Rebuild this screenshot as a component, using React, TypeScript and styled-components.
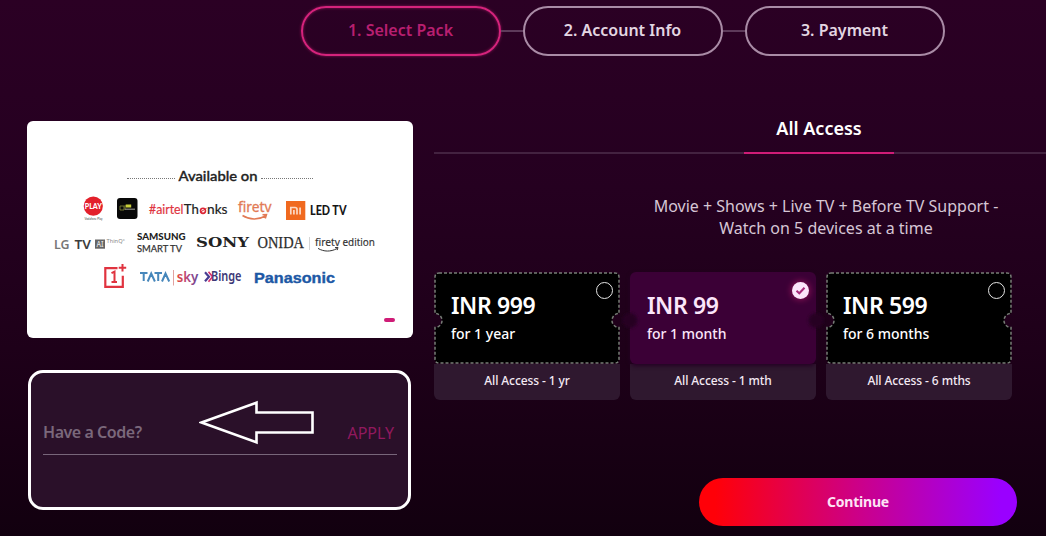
import React from "react";
import styled, { createGlobalStyle, css } from "styled-components";

const GlobalStyle = createGlobalStyle`
  * {
    box-sizing: border-box;
  }
  body {
    margin: 0;
    overflow: hidden;
    background: #16000f;
    font-family: "Noto Sans", "Open Sans", sans-serif;
  }
`;

const steps = ["1. Select Pack", "2. Account Info", "3. Payment"];

const packs = [
  { price: "INR 999", period: "for 1 year", name: "All Access - 1 yr" },
  { price: "INR 99", period: "for 1 month", name: "All Access - 1 mth" },
  { price: "INR 599", period: "for 6 months", name: "All Access - 6 mths" },
];

interface LogoProps {
  width: number;
  children: React.ReactNode;
}
// every logo in a row shares the same 30px tall box
const Logo = ({ width, children }: LogoProps) => (
  <LogoSvg width={width} height={30} viewBox={`0 0 ${width} 30`}>
    {children}
  </LogoSvg>
);

interface WordProps extends React.SVGProps<SVGTextElement> {
  length: number;
}
const Word = ({ length, children, ...rest }: WordProps) => (
  <text textLength={length} lengthAdjust="spacingAndGlyphs" {...rest}>
    {children}
  </text>
);

const Partners = () => (
  <Banner>
    <BannerTitle>
      <Dots $width={48} />
      <svg width={80} height={18}>
        <Word length={79} x={0.5} y={13.5} fontSize={13.5} fontFamily="Lato, sans-serif" fontWeight={500} fill="#222" stroke="#222" strokeWidth={0.35}>
          Available on
        </Word>
      </svg>
      <Dots $width={52} />
    </BannerTitle>
    <LogoRow $left={55}>
      <Logo width={35}>
        <circle cx={11.3} cy={11.1} r={9.6} fill="#e3202b" />
        <Word length={17} x={2.8} y={14.1} fontSize={8} fontFamily="Lato, sans-serif" fontWeight={900} fill="#fff">
          PLAY
        </Word>
        <Word length={18} x={2.5} y={25.2} fontSize={4} fontFamily="Lato, sans-serif" fill="#3c4a48">
          Vodafone Play
        </Word>
      </Logo>
      <Logo width={32}>
        <rect x={0} y={3} width={20.5} height={21} rx={3} fill="#080808" />
        <path d="M3 11h4v4H3zM8 10v5" fill="none" stroke="#8c913c" strokeWidth={0.8} />
        <rect x={8.7} y={9.5} width={5.5} height={3} fill="#c9cf3a" />
        <path d="M8 14.2h10" stroke="#8b8b86" strokeWidth={1.2} />
      </Logo>
      <Logo width={89}>
        <Word length={34.5} x={0} y={19} fontSize={13} fontFamily="Lato, sans-serif" fill="#e0343f" stroke="#e0343f" strokeWidth={0.2}>
          #airtel
        </Word>
        <Word length={15} x={34.8} y={19} fontSize={13} fontFamily="Lato, sans-serif" fill="#222" stroke="#222" strokeWidth={0.2}>
          Th
        </Word>
        <ellipse cx={54} cy={15.8} rx={2.5} ry={2.6} fill="none" stroke="#dc2636" strokeWidth={1.6} />
        <path d="M51 17.3l6.5-4" stroke="#dc2636" strokeWidth={1} />
        <Word length={20.5} x={58} y={19} fontSize={13} fontFamily="Lato, sans-serif" fill="#222" stroke="#222" strokeWidth={0.2}>
          nks
        </Word>
      </Logo>
      <Logo width={48}>
        <Word length={33.5} x={0} y={17} fontSize={14} fontFamily="Noto Sans, sans-serif" fill="#e27a55" stroke="#e27a55" strokeWidth={0.3}>
          firetv
        </Word>
        <path d="M4.5 20.5c7 4.5 16 4.5 23 .5M24.5 19.8l4-.2-1.2 3.8" fill="none" stroke="#e27a55" strokeWidth={1.5} />
      </Logo>
      <Logo width={24}>
        <rect x={0} y={6} width={19.3} height={19} fill="#f0691f" />
        <path d="M4.8 19.5v-7h4.2q2 0 2 2v5M7.9 15v4.5M14.1 12.5v7" fill="none" stroke="#fbd9c5" strokeWidth={1.7} />
      </Logo>
      <Logo width={38}>
        <Word length={36.5} x={0} y={19.5} fontSize={13} fontFamily="Lato, sans-serif" fontWeight={900} fill="#161616">
          LED TV
        </Word>
      </Logo>
    </LogoRow>
    <LogoRow $left={27}>
      <Logo width={83}>
        <Word length={15.5} x={0} y={19.5} fontSize={12} fontFamily="Noto Sans, sans-serif" fontWeight={600} fill="#777">
          LG
        </Word>
        <Word length={16.5} x={20.5} y={19.5} fontSize={12} fontFamily="Noto Sans, sans-serif" fontWeight={600} fill="#3d3d3d">
          TV
        </Word>
        <rect x={41} y={10.5} width={10} height={9.2} fill="#666" />
        <Word length={7} x={42.5} y={18} fontSize={8} fontFamily="Noto Sans, sans-serif" fontWeight={600} fill="#ddd">
          AI
        </Word>
        <Word length={18.5} x={52.5} y={14} fontSize={5.5} fontFamily="Noto Sans, sans-serif" fill="#888">
          ThinQ°
        </Word>
      </Logo>
      <Logo width={59}>
        <Word length={48.5} x={0} y={11} fontSize={10} fontFamily="Lato, sans-serif" fontWeight={900} fill="#222">
          SAMSUNG
        </Word>
        <Word length={45} x={0} y={23.4} fontSize={10} fontFamily="Lato, sans-serif" fill="#333" stroke="#333" strokeWidth={0.25}>
          SMART TV
        </Word>
      </Logo>
      <Logo width={62}>
        <Word length={53} x={0} y={18} fontSize={12.5} fontFamily="DejaVu Serif, serif" fontWeight={700} fill="#222">
          SONY
        </Word>
      </Logo>
      <Logo width={57}>
        <Word length={46.5} x={-0.5} y={19} fontSize={16} fontFamily="Liberation Serif, serif" fill="#2c2c2c" stroke="#2c2c2c" strokeWidth={0.25}>
          ONIDA
        </Word>
        <path d="M51.5 8v13" stroke="#d5d5d5" strokeWidth={1} />
      </Logo>
      <Logo width={62}>
        <Word length={25} x={0} y={17} fontSize={11} fontFamily="Noto Sans, sans-serif" fill="#333" stroke="#333" strokeWidth={0.15}>
          firetv
        </Word>
        <Word length={32.5} x={27.5} y={17} fontSize={11} fontFamily="Noto Sans, sans-serif" fill="#333" stroke="#333" strokeWidth={0.15}>
          edition
        </Word>
        <path d="M3 19.4c6 3.5 12.5 3.5 19 .2M20 18.6l3-.2-.8 2.7" fill="none" stroke="#333" strokeWidth={1} />
      </Logo>
    </LogoRow>
    <LogoRow $left={77}>
      <Logo width={36}>
        <path d="M13.5 5.2H1.3v18.6h17.5v-11" fill="none" stroke="#e0333f" strokeWidth={2.2} />
        <path d="M18.5 1v7.5M14.7 4.7h7.5" stroke="#e0333f" strokeWidth={2} />
        <path d="M7.5 10.2l3-1.5v10.5M7.5 19h5.5" fill="none" stroke="#e0333f" strokeWidth={2} />
      </Logo>
      <Logo width={64}>
        <path
          d="M0 10h7.5M3.7 10v8M7.7 18.5l3.5-8 3.7 8M14.5 10h7.5M18.2 10v8M22 18.5l3.5-8 3.7 8"
          fill="none"
          stroke="#4787bb"
          strokeWidth={2}
        />
        <path d="M33.5 7v15.5" stroke="#e2a2a0" strokeWidth={1} />
        <Word length={21.5} x={36.7} y={18.5} fontSize={14} fontFamily="Noto Sans, sans-serif" fontWeight={600} fill="url(#sky)">
          sky
        </Word>
        <defs>
          <linearGradient id="sky">
            <stop offset="0" stopColor="#e3473b" />
            <stop offset="0.5" stopColor="#b4457e" />
            <stop offset="1" stopColor="#654595" />
          </linearGradient>
        </defs>
      </Logo>
      <Logo width={50}>
        <path d="M1 9.3l4 4.5-4 4.500" fill="none" stroke="#473c91" strokeWidth={2.2} />
        <path d="M4.5 8.8l4 5-4 5" fill="none" stroke="#d72e67" strokeWidth={1.6} />
        <Word length={30.5} x={7} y={18.3} fontSize={13.5} fontFamily="Noto Sans, sans-serif" fontWeight={600} fill="#3d3876">
          Binge
        </Word>
      </Logo>
      <Logo width={82}>
        <Word length={81} x={0} y={19.5} fontSize={15.5} fontFamily="Liberation Sans, sans-serif" fontWeight={700} fill="#1d58a5" stroke="#1d58a5" strokeWidth={0.4}>
          Panasonic
        </Word>
      </Logo>
    </LogoRow>
    <SlideMark />
  </Banner>
);

interface PackProps {
  price: string;
  period: string;
  name: string;
  selected: boolean;
}
const PackCard = ({ price, period, name, selected }: PackProps) => (
  <StyledPack>
    <Ticket $selected={selected}>
      {!selected && (
        <TicketShape width={186} height={92}>
          <path
            d="M5 1H181Q185 1 185 5V41.5A7 7 0 0 0 185 55.5V87Q185 91 181 91H5Q1 91 1 87V55.5A7 7 0 0 0 1 41.5V5Q1 1 5 1Z"
            fill="#000"
            stroke="#777d76"
            strokeWidth={1.5}
            strokeDasharray="3 2"
          />
        </TicketShape>
      )}
      {selected && (
        <TicketShape width={186} height={92}>
          <defs>
            <filter id="soft" x="-50%" y="-50%" width="200%" height="200%">
              <feGaussianBlur stdDeviation={1.5} />
            </filter>
          </defs>
          <g fill="#250020" filter="url(#soft)">
            <circle cx={0} cy={48.5} r={7.5} />
            <circle cx={186} cy={48.5} r={7.5} />
          </g>
        </TicketShape>
      )}
      <Radio $selected={selected}>
        {selected && (
          <svg width={17} height={17}>
            <path d="M4.5 8.8l2.8 2.5 5.2-5.5" fill="none" stroke="#a62a78" strokeWidth={2} />
          </svg>
        )}
      </Radio>
      <Price>{price}</Price>
      <Period>{period}</Period>
    </Ticket>
    <PackName>{name}</PackName>
  </StyledPack>
);

const App = () => {
  return (
    <Page>
      <GlobalStyle />
      <Steps>
        {steps.map((step, i) => (
          <React.Fragment key={step}>
            {i > 0 && <StepLine />}
            <Step $active={i === 0}>{step}</Step>
          </React.Fragment>
        ))}
      </Steps>
      <Columns>
        <LeftColumn>
          <Partners />
          <CodeBox>
            <CodeField>
              <CodeLabel>Have a Code?</CodeLabel>
              <Apply>APPLY</Apply>
            </CodeField>
            <Arrow width={116} height={46} viewBox="0 0 116 46">
              <path d="M2.5 22.5L57.5 2.7V12.5H113.5V32.5H57.5V42.3Z" fill="none" stroke="#fff" strokeWidth={2.6} />
            </Arrow>
          </CodeBox>
        </LeftColumn>
        <RightColumn>
          <Tabs>
            <Tab>All Access</Tab>
          </Tabs>
          <Description>
            Movie + Shows + Live TV + Before TV Support -<br />
            Watch on 5 devices at a time
          </Description>
          <Packs>
            {packs.map((pack, i) => (
              <PackCard key={pack.name} {...pack} selected={i === 1} />
            ))}
          </Packs>
          <Continue>Continue</Continue>
        </RightColumn>
      </Columns>
    </Page>
  );
};

const Page = styled.div`
  width: 1046px;
  height: 536px;
  padding-top: 6px;
  overflow: hidden;
  background: linear-gradient(#2b0024 0%, #250020 35%, #1e0019 65%, #12000f 100%);
`;

const Steps = styled.div`
  display: flex;
  align-items: center;
  padding-left: 301px;
`;

const Step = styled.div<{ $active: boolean }>`
  display: flex;
  align-items: center;
  justify-content: center;
  width: 200px;
  height: 50px;
  padding: 0 1px 2px 0;
  border: 2px solid #a98ba6;
  border-radius: 25px;
  color: #e3d6e2;
  font-size: 16px;
  font-weight: 600;
  ${(p) =>
    p.$active &&
    css`
      border-color: #d5237c;
      color: #b81f70;
      box-shadow: 0 0 3px #8d1356, inset 0 0 3px #8d1356;
    `}
`;

const StepLine = styled.div`
  width: 22px;
  height: 2px;
  background: #5d3a5a;
`;

const Columns = styled.div`
  display: flex;
  gap: 21px;
  padding: 65px 0 0 27px;
`;

const LeftColumn = styled.div`
  display: flex;
  flex: none;
  flex-direction: column;
  gap: 32px;
  width: 386px;
`;

const Banner = styled.div`
  position: relative;
  height: 217px;
  padding-top: 46px;
  border-radius: 6px;
  background: #fff;
`;

const BannerTitle = styled.div`
  display: flex;
  gap: 3px;
  height: 28px;
  padding-left: 100px;
`;

const Dots = styled.div<{ $width: number }>`
  width: ${(p) => p.$width}px;
  height: 12px;
  border-bottom: 1px dotted #777;
`;

const LogoRow = styled.div<{ $left: number }>`
  display: flex;
  height: 34px;
  padding-left: ${(p) => p.$left}px;
`;

const LogoSvg = styled.svg`
  display: block;
  flex: none;
  overflow: visible;
`;

const SlideMark = styled.div`
  position: absolute;
  right: 18px;
  bottom: 16px;
  width: 11px;
  height: 4px;
  border-radius: 2px;
  background: #cf1c77;
`;

const CodeBox = styled.div`
  position: relative;
  width: 383px;
  height: 140px;
  margin-left: 1px;
  padding: 45px 11px 0 12px;
  border: 3px solid #fff;
  border-radius: 15px;
  background: #2a1029;
`;

const CodeField = styled.div`
  display: flex;
  align-items: center;
  justify-content: space-between;
  height: 37px;
  padding-right: 3px;
  padding-bottom: 8px;
  border-bottom: 1px solid #78667a;
`;

const CodeLabel = styled.span`
  color: #7a687b;
  font-size: 16px;
  font-weight: 600;
  letter-spacing: -0.45px;
`;

const Apply = styled.span`
  padding-top: 2px;
  color: #92195f;
  font-size: 16px;
`;

const Arrow = styled.svg`
  position: absolute;
  left: 168px;
  top: 27px;
`;

const RightColumn = styled.div`
  display: flex;
  flex: none;
  flex-direction: column;
  width: 770px;
`;

const Tabs = styled.div`
  display: flex;
  justify-content: center;
  height: 33px;
  border-bottom: 2px solid #432240;
`;

const Tab = styled.div`
  width: 150px;
  height: 38px;
  margin-top: -5px;
  border-bottom: 2px solid #cf1c77;
  color: #fff;
  font-size: 18px;
  font-weight: 600;
  line-height: 25px;
  text-align: center;
`;

const Description = styled.div`
  width: 784px;
  height: 118px;
  padding-top: 41px;
  color: #d6c6d5;
  font-size: 16px;
  line-height: 22px;
  text-align: center;
`;

const Packs = styled.div`
  display: flex;
  gap: 10px;
`;

const StyledPack = styled.div`
  width: 186px;
  height: 128px;
`;

const Ticket = styled.div<{ $selected: boolean }>`
  position: relative;
  height: 92px;
  padding: 18px 0 0 17px;
  border-radius: 6px;
  color: #fff;
  ${(p) =>
    p.$selected &&
    css`
      background: #3b0036;
      box-shadow: 0 2px 4px #250024;
      color: #fbe6fa;
    `}
`;

const TicketShape = styled.svg`
  position: absolute;
  left: 0;
  top: 0;
  overflow: visible;
`;

const Radio = styled.div<{ $selected: boolean }>`
  position: absolute;
  right: 7px;
  top: 10px;
  width: 17px;
  height: 17px;
  border: 1px solid #e6e6e6;
  border-radius: 50%;
  ${(p) =>
    p.$selected &&
    css`
      border: 0;
      background: #fbe6fa;
      box-shadow: 0 0 6px 1px #8d1356;
    `}
`;

const Price = styled.div`
  position: relative;
  font-size: 23px;
  font-weight: 600;
  letter-spacing: -0.4px;
  line-height: 30px;
`;

const Period = styled.div`
  position: relative;
  margin-top: 4px;
  font-size: 14px;
  font-weight: 500;
  line-height: 20px;
`;

const PackName = styled.div`
  height: 36px;
  padding-top: 8px;
  border-radius: 0 0 6px 6px;
  background: #2f182f;
  color: #f4eaf4;
  font-size: 12px;
  font-weight: 500;
  letter-spacing: -0.1px;
  line-height: 18px;
  text-align: center;
`;

const Continue = styled.button`
  width: 318px;
  height: 48px;
  margin: 78px 0 0 265px;
  padding: 0 0 1px;
  border: 0;
  border-radius: 24px;
  background: linear-gradient(90deg, #ff0008 5%, #cc0088 50%, #9a00ff 95%);
  color: #fde3f5;
  font-family: inherit;
  font-size: 14px;
  font-weight: 700;
  letter-spacing: -0.2px;
`;

export default App;
